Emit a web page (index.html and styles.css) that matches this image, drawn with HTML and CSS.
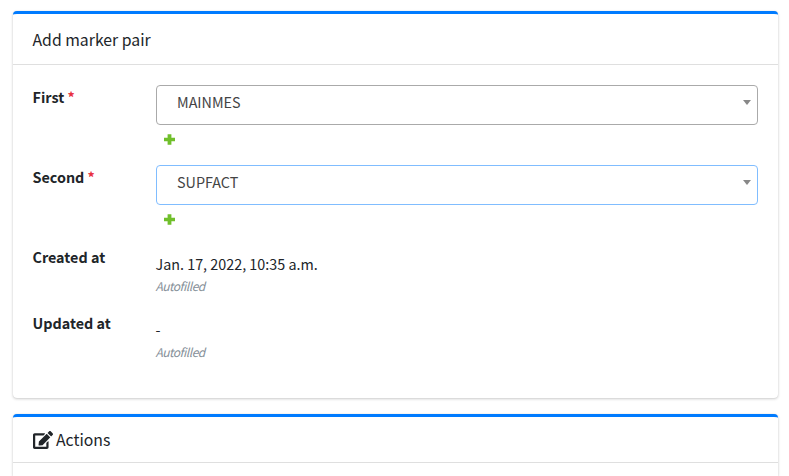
FILE: index.html
```html
<!DOCTYPE html>
<html lang="en">
<head>
<meta charset="utf-8">
<title>Add marker pair</title>
<link rel="stylesheet" href="styles.css">
</head>
<body>
<section class="card">
  <header class="card-header"><h3>Add marker pair</h3></header>
  <div class="card-body">
    <div class="row row-select">
      <label>First <span class="req">*</span></label>
      <div class="field">
        <div class="select"><span>MAINMES</span><i class="arrow"></i></div>
        <a class="add"><svg viewBox="0 0 11 11"><path d="M3.600 0.300h3.800v3.400H11v3.600H7.400v3.400H3.600V7.300H0V3.700h3.600z"/></svg></a>
      </div>
    </div>
    <div class="row row-select">
      <label>Second <span class="req">*</span></label>
      <div class="field">
        <div class="select focus"><span>SUPFACT</span><i class="arrow"></i></div>
        <a class="add"><svg viewBox="0 0 11 11"><path d="M3.600 0.300h3.800v3.400H11v3.600H7.400v3.400H3.600V7.300H0V3.700h3.600z"/></svg></a>
      </div>
    </div>
    <div class="row row-text">
      <label>Created at</label>
      <div class="field readonly"><div>Jan. 17, 2022, 10:35 a.m.</div><div class="help">Autofilled</div></div>
    </div>
    <div class="row row-text">
      <label>Updated at</label>
      <div class="field readonly"><div>-</div><div class="help">Autofilled</div></div>
    </div>
  </div>
</section>
<section class="card actions">
  <header class="card-header"><h3><svg class="edit" viewBox="0 0 576 512"><path d="M402.600 83.200l90.200 90.200c3.800 3.800 3.800 10 0 13.800L274.400 405.600l-92.800 10.300c-12.400 1.400-22.900-9.100-21.500-21.500l10.300-92.800L388.800 83.200c3.800-3.800 10-3.800 13.800 0zm162-22.900l-48.800-48.800c-15.200-15.200-39.900-15.200-55.200 0l-35.400 35.400c-3.800 3.800-3.800 10 0 13.800l90.200 90.200c3.800 3.800 10 3.800 13.800 0l35.400-35.400c15.200-15.300 15.200-40 0-55.200zM384 346.200V448H64V128h229.800c3.200 0 6.200-1.300 8.500-3.500l40-40c7.600-7.600 2.200-20.500-8.500-20.500H48C21.500 64 0 85.500 0 112v352c0 26.500 21.500 48 48 48h352c26.500 0 48-21.500 48-48V306.200c0-10.700-12.900-16-20.500-8.500l-40 40c-2.200 2.300-3.500 5.300-3.500 8.500z"/></svg>Actions</h3></header>
</section>
</body>
</html>
```
FILE: styles.css
```css
*{box-sizing:border-box}
body{margin:0;padding:11px 11px 0 12.5px;height:476px;overflow:hidden;background:#fff;color:#212529;font:400 14.35px/24px "Noto Sans CJK SC",sans-serif}
.card{background:#fff;border-top:3px solid #007bff;border-radius:4px;box-shadow:0 0 1px rgba(0,0,0,.13),0 1px 3px rgba(0,0,0,.2);height:387px;margin-bottom:16px}
.card.actions{height:62px;margin:0;border-radius:4px 4px 0 0}
.card-header{height:51px;padding:14px 20px;border-bottom:1px solid rgba(0,0,0,.125)}
.actions .card-header{height:46px;padding:11px 20px}
h3{margin:0;font-size:15.8px;font-weight:400;line-height:24px;display:flex;align-items:center}
.card-body{padding:20px}
.row{display:grid;grid-template-columns:123px 1fr}
.row-select{height:80px}
.row-text{height:66px}
label{font-weight:700}
.req{color:#e8303f}
.field{min-width:0}
.select{height:40px;border:1px solid #aaa;border-radius:4px;padding:4px 6px 0 20.5px;display:flex;justify-content:space-between;color:#444}
.select.focus{border-color:#80bdff}
.arrow{width:0;height:0;border:4px solid transparent;border-top:5px solid #888;border-bottom:0;margin-top:10px}
.add{display:block;padding:9px 0 0 8.5px;height:20px}
.add svg{display:block;width:11px;height:11px;fill:#70bf2b}
.readonly{padding-top:7px}
.help{font-size:12px;font-style:italic;letter-spacing:-.5px;color:#869099;line-height:19px}
.edit{width:20px;height:18px;margin-right:3.5px;fill:#212529}
```
